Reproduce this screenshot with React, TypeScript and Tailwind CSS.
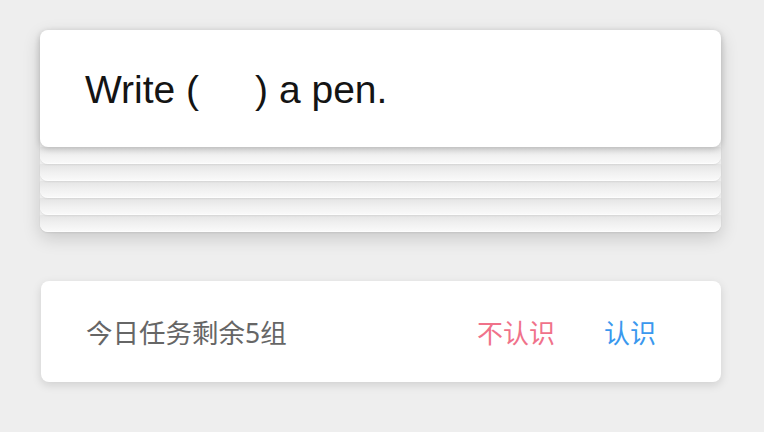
import React from "react";

const strips = [0, 1, 2, 3, 4];

export default function App() {
  return (
    <div className="w-[764px] h-[432px] bg-[#eeeeee] pt-[30px] pl-[40px] overflow-hidden" style={{ fontFamily: '"Noto Sans", "Noto Sans CJK SC", sans-serif' }}>
      <div className="w-[681px] rounded-[8px] shadow-[0_6px_18px_rgba(0,0,0,0.16)]">
        <div className="relative z-10 h-[117px] rounded-[8px] bg-white shadow-[0_2px_6px_rgba(0,0,0,0.2)] flex items-center pl-[45px] pt-[3px]">
          <span className="text-[39px] text-[#141414]" style={{ fontFamily: '"Liberation Sans", Arial, sans-serif' }}>
            Write (<span className="inline-block w-[56px]"></span>) a pen.
          </span>
        </div>
        {strips.map((i) => (
          <div
            key={i}
            className="h-[17px] rounded-b-[8px] bg-gradient-to-b from-[#e4e4e4] via-[#f0f0f0] to-[#f9f9f9] border-b border-[#fdfdfd] shadow-[0_1px_2px_rgba(0,0,0,0.07)] relative"
            style={{ zIndex: 9 - i }}
          />
        ))}
      </div>
      <div className="mt-[49px] ml-[1px] w-[680px] h-[101px] rounded-[8px] bg-white shadow-[0_3px_10px_rgba(0,0,0,0.13)] flex items-center pl-[45px] pr-[65px] pt-[4px]">
        <span className="text-[26.5px] text-[#666666]">今日任务剩余5组</span>
        <span className="ml-auto text-[26px] text-[#f0728a]">不认识</span>
        <span className="ml-[49px] text-[26px] text-[#3a98ee]">认识</span>
      </div>
    </div>
  );
}
